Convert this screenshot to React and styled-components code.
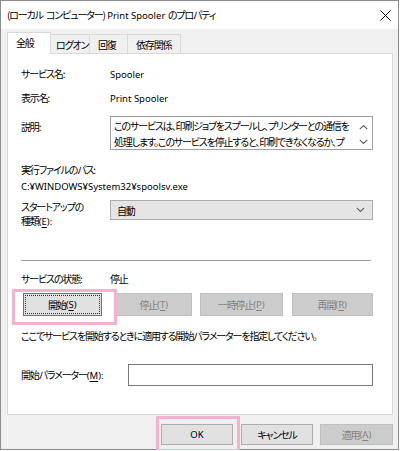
import React from "react";
import styled, { createGlobalStyle } from "styled-components";

const GlobalStyle = createGlobalStyle`
  html, body {
    margin: 0;
    padding: 0;
    background: #ffffff;
  }
  body {
    font-family: "Noto Sans CJK JP", "Noto Sans", sans-serif;
    font-size: 10px;
    letter-spacing: -1.15px;
    word-spacing: 2px;
    font-feature-settings: "palt";
    color: #000;
  }
`;

// latin runs keep normal spacing; the kana/kanji are squeezed
const Latin = styled.span`
  font-family: "Noto Sans", "Noto Sans CJK JP", sans-serif;
  font-size: 9.5px;
  letter-spacing: 0;
  word-spacing: 0;
  & u {
    text-decoration: underline;
    text-underline-offset: 2px;
  }
`;

const Window = styled.div`
  position: relative;
  width: 397px;
  height: 448px;
  border: 1px solid #8c8c8c;
  display: flex;
  flex-direction: column;
  background: #f0f0f0;
`;

const TitleBar = styled.div`
  height: 28px;
  background: #ffffff;
  display: flex;
  align-items: center;
  justify-content: space-between;
  padding: 0 7px 0 6px;
`;

const Title = styled.span`
  line-height: 14px;
`;

const CloseIcon = styled.svg`
  width: 11px;
  height: 11px;
`;

const Body = styled.div`
  flex: 1;
  padding: 3px 6px 0 6px;
  display: flex;
  flex-direction: column;
`;

const TabRow = styled.div`
  display: flex;
  align-items: flex-end;
  height: 22px;
  position: relative;
  z-index: 1;
`;

const Tab = styled.div`
  width: ${(p) => p.$w}px;
  height: ${(p) => (p.$active ? 22 : 20)}px;
  box-sizing: border-box;
  border: 1px solid #d9d9d9;
  border-bottom: ${(p) => (p.$active ? "none" : "1px solid #d9d9d9")};
  border-left: ${(p) => (p.$first || p.$active ? "1px solid #d9d9d9" : "none")};
  background: ${(p) => (p.$active ? "#ffffff" : "#f0f0f0")};
  display: flex;
  align-items: center;
  padding-left: ${(p) => p.$pl}px;
  padding-bottom: ${(p) => (p.$active ? 2 : 0)}px;
  white-space: nowrap;
`;

const Panel = styled.div`
  box-sizing: border-box;
  width: 386px;
  height: 362px;
  margin-top: -1px;
  background: #ffffff;
  border: 1px solid #d9d9d9;
  padding: 12px 19px 0 13px;
  display: flex;
  flex-direction: column;
`;

const Row = styled.div`
  display: flex;
  align-items: ${(p) => p.$align || "center"};
  height: ${(p) => p.$h}px;
  margin-top: ${(p) => p.$mt || 0}px;
  white-space: nowrap;
`;

const Label = styled.div`
  width: ${(p) => p.$w || 89}px;
  flex-shrink: 0;
  line-height: ${(p) => p.$lh || 16}px;
  margin-top: ${(p) => p.$mt || 0}px;
`;

const Value = styled.div`
  line-height: 16px;
`;

const TextBox = styled.div`
  flex: 1;
  height: 34px;
  box-sizing: border-box;
  border: 1px solid #a0a0a0;
  display: flex;
  overflow: hidden;
`;

const TextBody = styled.div`
  flex: 1;
  padding: 1px 0 0 3px;
  line-height: 16px;
  overflow: hidden;
`;

const ScrollBar = styled.div`
  width: 17px;
  display: flex;
  flex-direction: column;
  align-items: center;
  justify-content: space-between;
  padding: 7px 0 4px;
`;

const Combo = styled.div`
  flex: 1;
  height: 20px;
  box-sizing: border-box;
  background: #e5e5e5;
  border: 1px solid #adadad;
  display: flex;
  align-items: center;
  justify-content: space-between;
  padding: 0 7px 0 6px;
`;

const Separator = styled.div`
  height: 1px;
  background: #a0a0a0;
  width: 350px;
  margin-top: ${(p) => p.$mt}px;
`;

const ButtonRow = styled.div`
  display: flex;
  margin-top: ${(p) => p.$mt || 0}px;
  padding-left: ${(p) => p.$pl || 0}px;
`;

const Button = styled.div`
  width: ${(p) => p.$w}px;
  height: ${(p) => p.$h || 23}px;
  margin-left: ${(p) => p.$ml || 0}px;
  box-sizing: border-box;
  display: flex;
  align-items: center;
  justify-content: center;
  white-space: nowrap;
  background: ${(p) => (p.$disabled ? "#cccccc" : "#e1e1e1")};
  border: 1px solid ${(p) => (p.$disabled ? "#bfbfbf" : p.$focus ? "#707070" : "#adadad")};
  color: ${(p) => (p.$disabled ? "#838383" : "#000")};
  ${(p) => (p.$focus ? "outline: 1px dotted #333; outline-offset: -3px;" : "")}
`;

const Highlight = styled.div`
  position: absolute;
  left: ${(p) => p.$x}px;
  top: ${(p) => p.$y}px;
  width: ${(p) => p.$w}px;
  height: ${(p) => p.$h}px;
  box-sizing: border-box;
  border: 3px solid #f5b2cf;
  pointer-events: none;
`;

const Input = styled.div`
  flex: 1;
  height: 22px;
  box-sizing: border-box;
  border: 1px solid #7a7a7a;
  background: #ffffff;
`;

const Footer = styled.div`
  display: flex;
  justify-content: flex-end;
  padding: 9px 0 0 0;
  margin-right: -1px;
`;

const Chevron = ({ up }) => (
  <svg width="9" height="6" viewBox="0 0 9 6">
    <path
      d={up ? "M0.8 5.2 L4.5 1.5 L8.2 5.2" : "M0.8 0.8 L4.5 4.5 L8.2 0.8"}
      fill="none"
      stroke="#606060"
      strokeWidth="1.1"
    />
  </svg>
);

export default function App() {
  return (
    <>
      <GlobalStyle />
      <Window>
        <TitleBar>
          <Title>
            (ローカル コンピューター)<Latin> Print Spooler </Latin>のプロパティ
          </Title>
          <CloseIcon viewBox="0 0 11 11">
            <path d="M0.5 0.5 L10.5 10.5 M10.5 0.5 L0.5 10.5" stroke="#000" strokeWidth="1" />
          </CloseIcon>
        </TitleBar>
        <Body>
          <TabRow>
            <Tab $w={44} $pl={8} $active $first>全般</Tab>
            <Tab $w={39} $pl={5}>ログオン</Tab>
            <Tab $w={38} $pl={8}>回復</Tab>
            <Tab $w={53} $pl={8}>依存関係</Tab>
          </TabRow>
          <Panel>
            <Row $h={16}>
              <Label>サービス名:</Label>
              <Latin>Spooler</Latin>
            </Row>
            <Row $h={16} $mt={8}>
              <Label>表示名:</Label>
              <Latin>Print Spooler</Latin>
            </Row>
            <Row $h={34} $mt={10} $align="flex-start">
              <Label $mt={3}>説明:</Label>
              <TextBox>
                <TextBody>
                  このサービスは、印刷ジョブをスプールし、プリンターとの通信を
                  <br />
                  処理します。このサービスを停止すると、印刷できなくなるか、プ
                  <br />
                  リンターが表示されなくなります。
                </TextBody>
                <ScrollBar>
                  <Chevron up />
                  <Chevron />
                </ScrollBar>
              </TextBox>
            </Row>
            <Row $h={16} $mt={12}>
              <Label $w={200}>実行ファイルのパス:</Label>
            </Row>
            <Row $h={16}>
              <Latin>C:¥WINDOWS¥System32¥spoolsv.exe</Latin>
            </Row>
            <Row $h={28} $mt={6} $align="flex-start">
              <Label $lh={14} $mt={0}>
                スタートアップの
                <br />
                種類<Latin>(<u>E</u>):</Latin>
              </Label>
              <Combo>
                <span>自動</span>
                <Chevron />
              </Combo>
            </Row>
            <Separator $mt={32} />
            <Row $h={16} $mt={10}>
              <Label>サービスの状態:</Label>
              <Value>停止</Value>
            </Row>
            <ButtonRow $mt={6} $pl={2}>
              <Button $w={79} $focus>
                開始<Latin>(<u>S</u>)</Latin>
              </Button>
              <Button $w={77} $ml={14} $disabled>
                停止<Latin>(<u>T</u>)</Latin>
              </Button>
              <Button $w={83} $ml={8} $disabled>
                一時停止<Latin>(<u>P</u>)</Latin>
              </Button>
              <Button $w={82} $ml={9} $disabled>
                再開<Latin>(<u>R</u>)</Latin>
              </Button>
            </ButtonRow>
            <Row $h={16} $mt={12}>
              <Value>ここでサービスを開始するときに適用する開始パラメーターを指定してください。</Value>
            </Row>
            <Row $h={22} $mt={20}>
              <Label $w={107}>
                開始パラメーター<Latin>(<u>M</u>):</Latin>
              </Label>
              <Input />
            </Row>
          </Panel>
          <Footer>
            <Button $w={72} $h={21}>
              <Latin>OK</Latin>
            </Button>
            <Button $w={72} $h={21} $ml={8}>
              キャンセル
            </Button>
            <Button $w={73} $h={21} $ml={7} $disabled>
              適用<Latin>(<u>A</u>)</Latin>
            </Button>
          </Footer>
        </Body>
        <Highlight $x={11} $y={288} $w={105} $h={36} />
        <Highlight $x={155} $y={415} $w={84} $h={36} />
      </Window>
    </>
  );
}
